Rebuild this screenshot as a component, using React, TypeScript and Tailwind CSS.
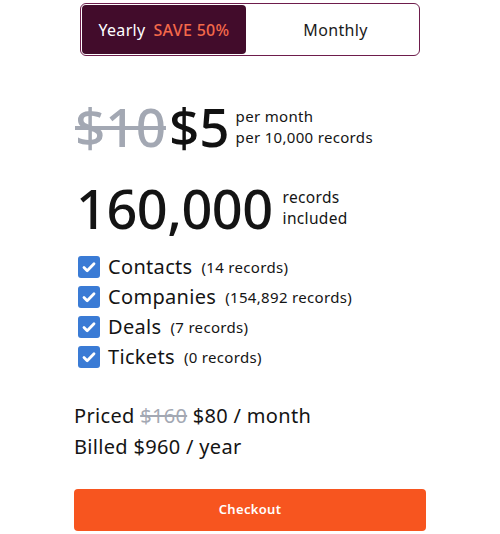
import React from 'react';

const items = [
  { name: 'Contacts', count: '14 records' },
  { name: 'Companies', count: '154,892 records' },
  { name: 'Deals', count: '7 records' },
  { name: 'Tickets', count: '0 records' },
];

const Check: React.FC = () => (
  <span className="flex h-[22px] w-[22px] shrink-0 items-center justify-center rounded-[3px] bg-[#3a7bd5]">
    <svg width="16" height="16" viewBox="0 0 16 16" fill="none">
      <path d="M3 8.5l3.2 3.2L13 4.8" stroke="white" strokeWidth="2.8" strokeLinecap="round" strokeLinejoin="round" />
    </svg>
  </span>
);

export default function App() {
  return (
    <div className="min-h-screen bg-white font-['Noto_Sans',sans-serif] tracking-[0.02em] text-[#141414]">
      <div className="mx-auto w-[352px] pt-[3px]">
        <div className="mx-[6px] flex h-[53px] rounded-[6px] border border-[#6e1d4c] p-[1px]">
          <button className="flex w-[164px] items-center justify-center gap-[8px] rounded-[4px] bg-[#420c2b] text-[16px] tracking-[0.02em]">
            <span className="text-white">Yearly</span>
            <span className="font-medium text-[#f4694a]">SAVE 50%</span>
          </button>
          <button className="flex flex-1 items-center justify-center pl-[7px] text-[16px] text-[#1a1a1a]">Monthly</button>
        </div>

        <div className="mt-[44px] flex items-center pl-[1px]">
          <span className="text-[53px] font-medium leading-none tracking-normal text-[#a3a8b3] line-through decoration-[4px]">$10</span>
          <span className="ml-[3px] text-[53px] font-medium leading-none tracking-normal text-[#111]">$5</span>
          <div className="ml-[6px] flex flex-col text-[15px] leading-[21px]">
            <span>per month</span>
            <span>per 10,000 records</span>
          </div>
        </div>

        <div className="mt-[28px] flex items-center pl-[2px]">
          <span className="text-[54px] font-medium leading-none tracking-[-0.5px]">160,000</span>
          <div className="ml-[10px] flex flex-col text-[15.5px] leading-[21px]">
            <span>records</span>
            <span>included</span>
          </div>
        </div>

        <ul className="mt-[21px] flex flex-col gap-[8px] pl-[4px]">
          {items.map((it) => (
            <li key={it.name} className="flex items-center">
              <Check />
              <span className="ml-[8px] text-[20px] leading-[22px]">{it.name}</span>
              <span className="ml-[9px] text-[15px] leading-[22px]">({it.count})</span>
            </li>
          ))}
        </ul>

        <div className="mt-[37px] flex flex-col gap-[9px] text-[20px] leading-[22px]">
          <div>
            Priced <span className="text-[#a3a8b3] line-through">$160</span> $80 / month
          </div>
          <div>Billed $960 / year</div>
        </div>

        <button className="mt-[31px] flex h-[42px] w-full items-center justify-center rounded-[4px] bg-[#f7551f] text-[13px] font-semibold text-white">
          Checkout
        </button>
      </div>
    </div>
  );
}
